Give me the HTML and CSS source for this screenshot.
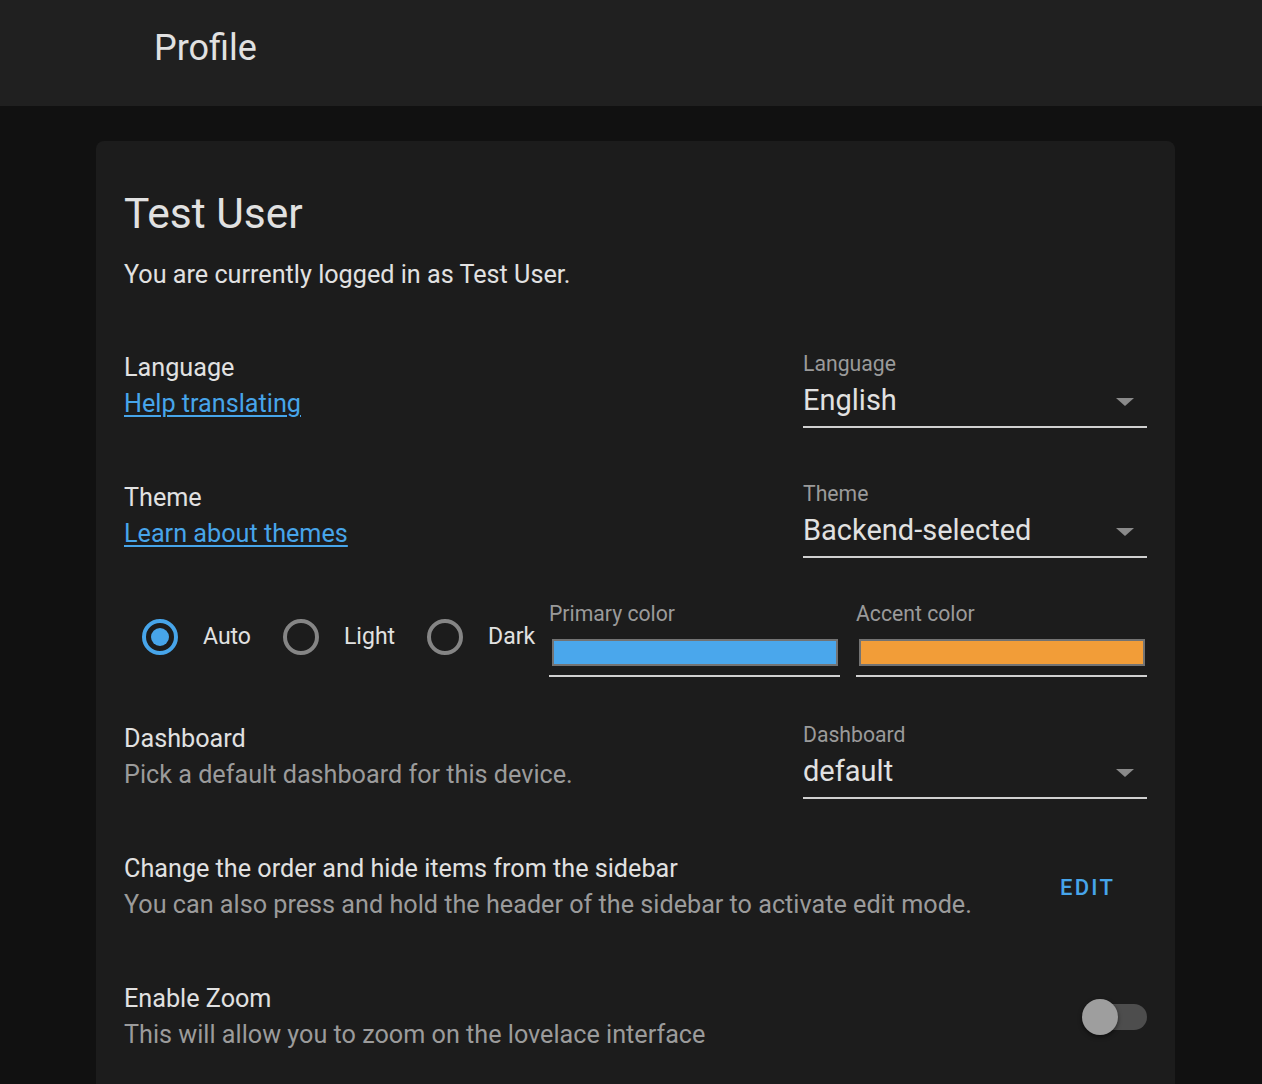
FILE: index.html
```html
<!DOCTYPE html>
<html lang="en">

<head>
    <meta charset="UTF-8">
    <meta name="viewport" content="width=device-width, initial-scale=1.0">
    <title>Profile</title>
    <link rel="stylesheet" href="styles.css">
</head>

<body>
    <div class="toolbar">
        <div class="main-title">Profile</div>
    </div>
    <div class="content">
        <div class="card">
            <h1 class="card-title">Test User</h1>
            <p class="card-text">You are currently logged in as Test User.</p>

            <div class="row">
                <div class="row-info">
                    <div class="heading">Language</div>
                    <a class="link" href="javascript:;">Help translating</a>
                </div>
                <div class="select">
                    <div class="select-label">Language</div>
                    <div class="select-value">English<span class="arrow"></span></div>
                </div>
            </div>

            <div class="row">
                <div class="row-info">
                    <div class="heading">Theme</div>
                    <a class="link" href="javascript:;">Learn about themes</a>
                </div>
                <div class="select">
                    <div class="select-label">Theme</div>
                    <div class="select-value">Backend-selected<span class="arrow"></span></div>
                </div>
            </div>

            <div class="row row-mode">
                <div class="radios">
                    <label class="radio-item">
                        <span class="radio checked"></span>
                        <span>Auto</span>
                    </label>
                    <label class="radio-item">
                        <span class="radio"></span>
                        <span>Light</span>
                    </label>
                    <label class="radio-item">
                        <span class="radio"></span>
                        <span>Dark</span>
                    </label>
                </div>
                <div class="colors">
                    <div class="color-field">
                        <div class="select-label">Primary color</div>
                        <div class="swatch primary"></div>
                    </div>
                    <div class="color-field">
                        <div class="select-label">Accent color</div>
                        <div class="swatch accent"></div>
                    </div>
                </div>
            </div>

            <div class="row">
                <div class="row-info">
                    <div class="heading">Dashboard</div>
                    <div class="secondary">Pick a default dashboard for this device.</div>
                </div>
                <div class="select">
                    <div class="select-label">Dashboard</div>
                    <div class="select-value">default<span class="arrow"></span></div>
                </div>
            </div>

            <div class="row">
                <div class="row-info">
                    <div class="heading">Change the order and hide items from the sidebar</div>
                    <div class="secondary">You can also press and hold the header of the sidebar to activate edit mode.</div>
                </div>
                <a class="btn" href="javascript:;">Edit</a>
            </div>

            <div class="row">
                <div class="row-info">
                    <div class="heading">Enable Zoom</div>
                    <div class="secondary">This will allow you to zoom on the lovelace interface</div>
                </div>
                <div class="switch">
                    <span class="knob"></span>
                </div>
            </div>
        </div>
    </div>
</body>

</html>
```

FILE: styles.css
```css
* {
    margin: 0;
    padding: 0;
    box-sizing: border-box;
}

body {
    background: #111111;
    color: #e1e1e1;
    font-family: Roboto, "Noto Sans", sans-serif;
}

a {
    text-decoration: none;
}

.toolbar {
    height: 106px;
    background: #202020;
    padding: 23px 0 0 154px;
}

.main-title {
    font-size: 36px;
    line-height: 50px;
}

.content {
    padding: 35px 0 0 96px;
}

.card {
    width: 1079px;
    background: #1c1c1c;
    border-radius: 8px;
    padding: 45px 28px 24px;
}

.card-title {
    font-size: 42.5px;
    font-weight: 400;
    line-height: 56px;
}

.card-text {
    margin-top: 15px;
    font-size: 25.2px;
    line-height: 36px;
    margin-bottom: 28px;
}

.row {
    height: 130px;
    padding: 29px 0;
    display: flex;
    align-items: flex-start;
    justify-content: space-between;
}

.row-info {
    font-size: 25.2px;
    line-height: 36px;
}

.heading {
    color: #e1e1e1;
}

.secondary {
    color: #9b9b9b;
}

.link {
    color: #47a5ea;
    text-decoration: underline;
    text-underline-offset: 3px;
    text-decoration-thickness: 2px;
}

/* dropdown */
.select {
    flex-shrink: 0;
    width: 344px;
    border-bottom: 2px solid #d0d0d0;
    padding-bottom: 6px;
}

.select-label {
    font-size: 21.2px;
    line-height: 28px;
    color: #9a9a9a;
}

.select-value {
    margin-top: 2px;
    font-size: 29px;
    line-height: 40px;
    color: #e1e1e1;
    display: flex;
    align-items: center;
    justify-content: space-between;
    padding-right: 13px;
}

.arrow {
    margin-top: 4px;
    border-left: 9px solid transparent;
    border-right: 9px solid transparent;
    border-top: 8px solid #8a8a8a;
}

/* mode + colors */
.row-mode {
    height: 111px;
    padding: 0;
    align-items: center;
}

.radios {
    display: flex;
    align-items: center;
    padding-left: 18px;
    font-size: 23px;
}

.radio-item {
    display: flex;
    align-items: center;
    margin-right: 32px;
}

.radio-item:last-child {
    margin-right: 0;
}

.radio {
    width: 36px;
    height: 36px;
    border: 4px solid #858585;
    border-radius: 50%;
    margin-right: 25px;
    display: flex;
    align-items: center;
    justify-content: center;
}

.radio.checked {
    border-color: #47a5ea;
}

.radio.checked::after {
    content: "";
    width: 18px;
    height: 18px;
    border-radius: 50%;
    background: #47a5ea;
}

.colors {
    display: flex;
    gap: 16px;
    align-self: flex-start;
    margin-top: 19px;
}

.color-field {
    width: 291px;
    border-bottom: 2px solid #d0d0d0;
    padding-bottom: 9px;
}

.swatch {
    height: 27px;
    margin: 11px 2px 0 3px;
    border: 2px solid #737373;
}

.swatch.primary {
    background: #4aa7ec;
}

.swatch.accent {
    background: #f29d38;
}

/* edit button */
.btn {
    align-self: center;
    margin-right: 32px;
    color: #47a5ea;
    font-size: 22px;
    font-weight: 500;
    letter-spacing: 2.2px;
    text-transform: uppercase;
}

/* toggle */
.switch {
    align-self: center;
    flex-shrink: 0;
    width: 64px;
    height: 26px;
    border-radius: 13px;
    background: #4d4d4d;
    display: flex;
    align-items: center;
}

.knob {
    flex-shrink: 0;
    width: 36px;
    height: 36px;
    margin-left: -1px;
    border-radius: 50%;
    background: #9e9e9e;
    box-shadow: 0 2px 4px rgba(0, 0, 0, 0.5);
}
```
